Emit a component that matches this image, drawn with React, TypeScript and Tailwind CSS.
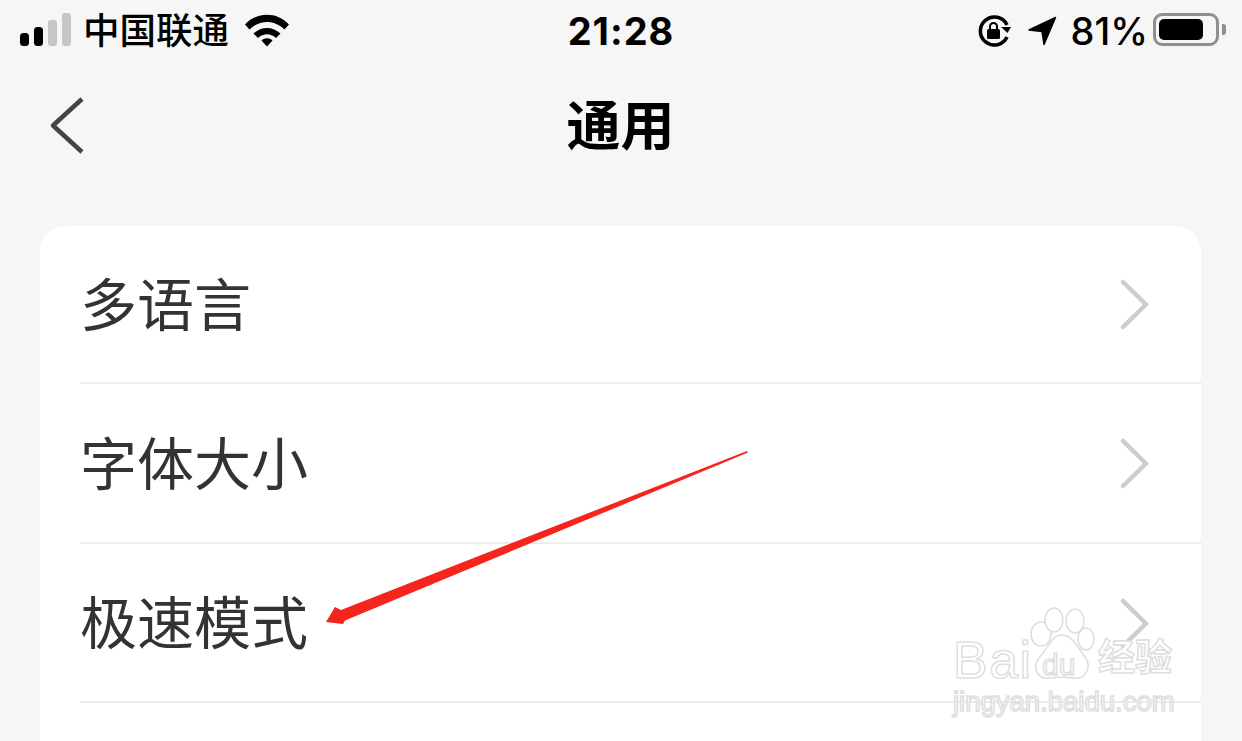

const Chevron = () => (
  <svg width="32" height="52" viewBox="0 0 32 52" fill="none" className="shrink-0 translate-y-[1px]">
    <path d="M4 3 L27 25.5 L4 48" stroke="#cdcdcd" strokeWidth="4.5" strokeLinecap="round" strokeLinejoin="round" />
  </svg>
);

const Row = ({ label, h }: { label: string; h: string }) => (
  <div className={`${h} ml-10 flex items-center justify-between border-b-2 border-[#ececec] pr-[50px]`}>
    <span className="-translate-y-[3px] text-[57px] leading-none text-[#333333]">{label}</span>
    <Chevron />
  </div>
);

export default function App() {
  return (
    <div
      className="relative h-[741px] w-[1242px] overflow-hidden bg-[#f6f6f6]"
      style={{ fontFamily: '"Noto Sans CJK SC", "Noto Sans", sans-serif' }}
    >
      {/* status bar */}
      <div className="grid h-[62px] grid-cols-[1fr_auto_1fr] items-center pl-5 pr-4 text-black">
        <div className="flex items-center">
          <svg width="52" height="34" viewBox="0 0 52 34" className="shrink-0 -translate-y-[1px]">
            <rect x="0" y="20" width="9" height="13" rx="3.5" fill="#000" />
            <rect x="14" y="14" width="9" height="19" rx="3.5" fill="#000" />
            <rect x="28" y="7" width="9" height="26" rx="3" fill="#c6c6c6" />
            <rect x="42" y="0" width="9" height="33" rx="3" fill="#c6c6c6" />
          </svg>
          <span className="ml-[11px] -translate-y-[2px] text-[36.5px] font-medium leading-none">中国联通</span>
          <svg width="46" height="34" viewBox="0 0 46 34" className="ml-[15px] shrink-0 -translate-y-[1px]">
            <path d="M1 11.5 C13 -1.5 33 -1.5 45 11.5 L40.5 16.5 C30.5 6.5 15.5 6.5 5.5 16.5 Z" fill="#000" />
            <path d="M9.5 20.5 C17 13 29 13 36.5 20.5 L32 25 C26.5 20 19.5 20 14 25 Z" fill="#000" />
            <path d="M17.5 27.5 C20.5 24.5 25.5 24.5 28.5 27.5 L23 33.5 Z" fill="#000" />
          </svg>
        </div>
        <span
          className="-translate-x-[2px] text-[38px] font-bold leading-none tracking-[1px]"
          style={{ fontFamily: 'Inter, "Liberation Sans", sans-serif' }}
        >
          21:28
        </span>
        <div className="flex items-center justify-end">
          <svg width="34" height="32" viewBox="0 0 34 32" fill="none" className="shrink-0">
            <path d="M29 22 A14 14 0 1 1 29 10" stroke="#000" strokeWidth="3.6" />
            <path d="M23 12 L33 12 L29.5 18 Z" fill="#000" />
            <rect x="9" y="14" width="13" height="10" rx="1.5" fill="#000" />
            <path d="M12 14 V11.5 A3.5 3.5 0 0 1 19 11.5 V14" stroke="#000" strokeWidth="2" />
          </svg>
          <svg width="30" height="30" viewBox="0 0 30 30" className="ml-[15px] shrink-0">
            <path d="M28.5 1.5 L2 14 L15 15.5 L17 28.5 Z" fill="#000" stroke="#000" strokeWidth="1.5" strokeLinejoin="round" />
          </svg>
          <span
            className="ml-[14px] text-[38px] font-medium leading-none"
            style={{ fontFamily: 'Inter, "Liberation Sans", sans-serif' }}
          >
            81%
          </span>
          <div className="mb-[3px] ml-[5px] flex items-center">
            <div className="flex h-[33px] w-[66px] items-center rounded-[9px] border-[3px] border-[#8f8f8f] p-[3px] pr-[13px]">
              <div className="h-full w-full rounded-[5px] bg-black" />
            </div>
            <div className="ml-[3px] h-[11px] w-[4px] rounded-r-[3px] bg-[#8f8f8f]" />
          </div>
        </div>
      </div>

      {/* nav bar */}
      <div className="grid h-[128px] grid-cols-[1fr_auto_1fr] items-center pl-[49px]">
        <svg width="36" height="58" viewBox="0 0 36 58" fill="none" className="shrink-0">
          <path d="M33 2 L4 28.5 L33 55" stroke="#444444" strokeWidth="4.5" strokeLinejoin="round" />
        </svg>
        <span className="-translate-x-[25px] -translate-y-[3px] text-[54px] font-bold leading-none text-black">通用</span>
        <span />
      </div>

      {/* card */}
      <div className="ml-10 mr-[41px] mt-[36px] h-[600px] rounded-t-[26px] bg-white">
        <Row label="多语言" h="h-[158px]" />
        <Row label="字体大小" h="h-[160px]" />
        <Row label="极速模式" h="h-[159px]" />
      </div>

      {/* red annotation arrow */}
      <svg className="absolute left-0 top-0 h-[741px] w-[1242px]" viewBox="0 0 1242 741">
        <polygon points="747,451 748,452.5 345,620.5 343,624 326,622 335,607 341,610" fill="#f5241c" />
      </svg>

      {/* watermark */}
      <div
        className="absolute left-[950px] top-[604px] h-[115px] w-[230px] leading-none text-white"
        style={{ WebkitTextStroke: "1.5px #dedede" }}
      >
        <span
          className="absolute left-[3px] top-[30px] text-[52px] leading-none tracking-[1.5px]"
          style={{ fontFamily: '"Liberation Sans", sans-serif' }}
        >
          Bai
        </span>
        <svg width="70" height="78" viewBox="0 0 70 78" fill="#fff" stroke="#dedede" strokeWidth="1.6" className="absolute left-[78px] top-0">
          <ellipse cx="13" cy="30" rx="10" ry="12" />
          <ellipse cx="26" cy="16" rx="9" ry="12" />
          <ellipse cx="47" cy="17" rx="9" ry="12" />
          <ellipse cx="58" cy="35" rx="8" ry="11" />
          <path d="M34 31 C44 31 50 44 57 53 C65 64 56 76 46 74 C38 73 30 73 22 74 C10 76 3 64 11 54 C19 45 24 31 34 31 Z" />
        </svg>
        <span
          className="absolute left-[92px] top-[46px] text-[30px] leading-none"
          style={{ fontFamily: '"Liberation Sans", sans-serif' }}
        >
          du
        </span>
        <span className="absolute left-[148px] top-[33px] text-[37px] font-bold leading-none">经验</span>
        <span
          className="absolute left-[3px] top-[84px] text-[27.5px] leading-none"
          style={{ fontFamily: '"Liberation Sans", sans-serif' }}
        >
          jingyan.baidu.com
        </span>
      </div>
    </div>
  );
}
